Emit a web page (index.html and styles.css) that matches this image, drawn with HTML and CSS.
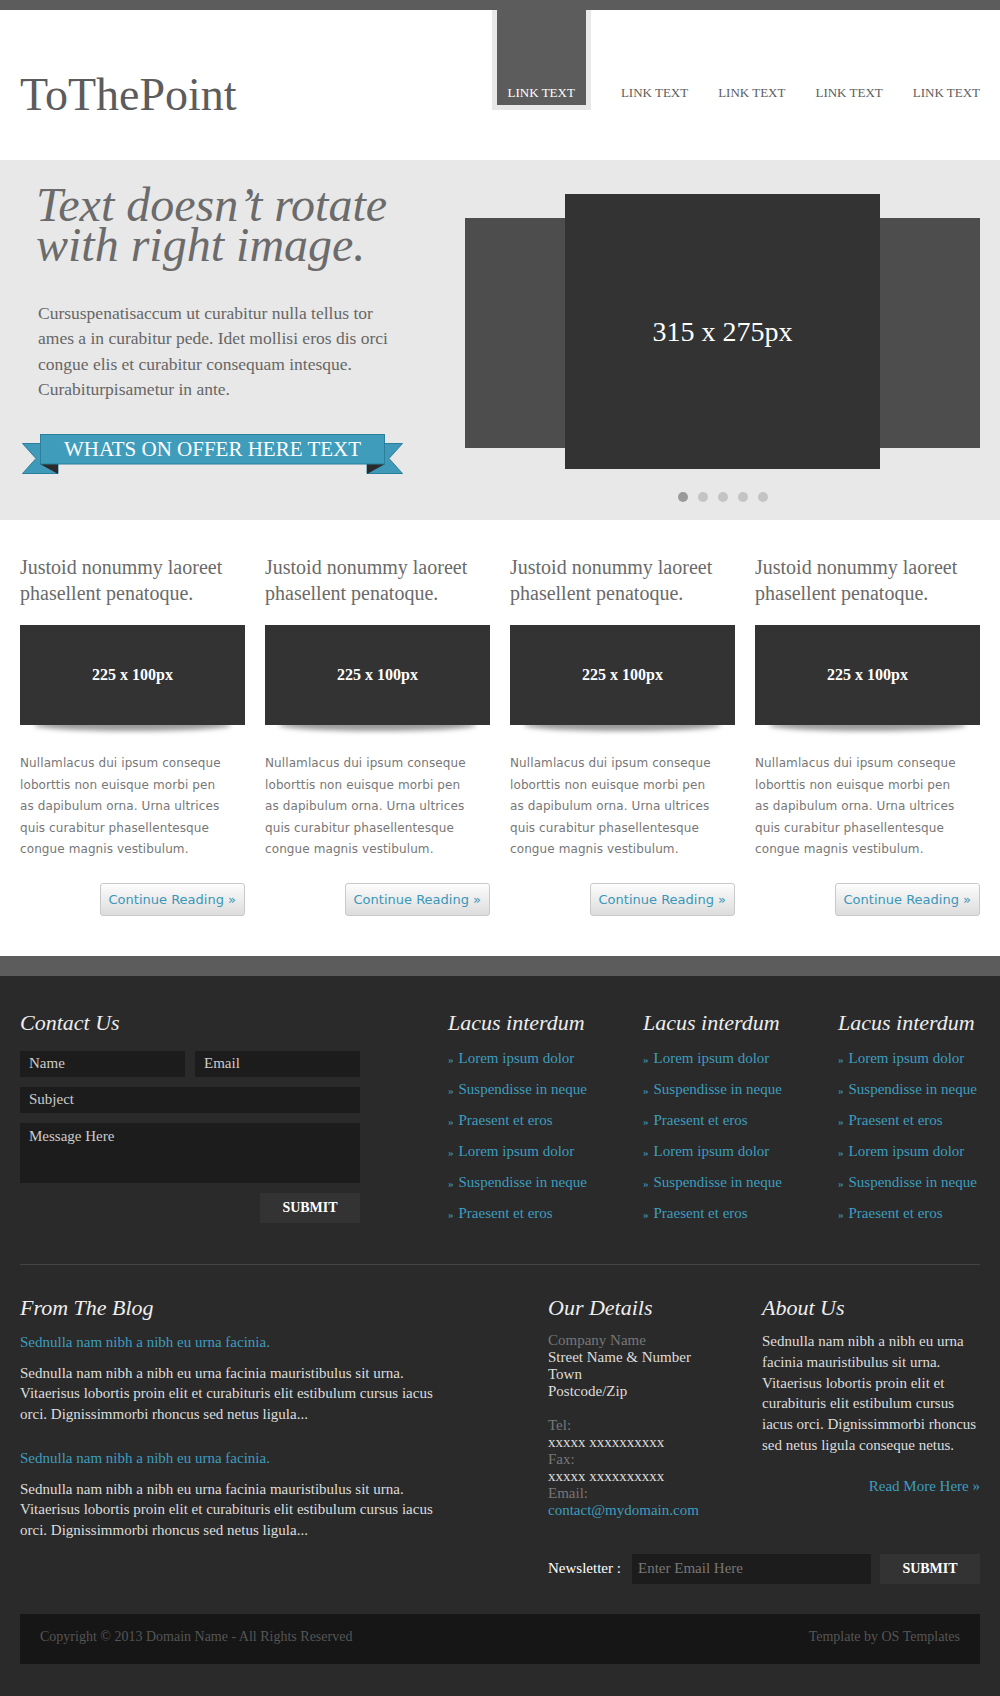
FILE: index.html
```html
<!DOCTYPE html>
<html lang="en">
<head>
    <meta charset="UTF-8">
    <meta name="viewport" content="width=device-width, initial-scale=1.0">
    <title>ToThePoint</title>
    <link rel="stylesheet" href="styles.css">
</head>
<body>

    <div class="topbar"></div>

    <!-- Header -->
    <div class="header">
        <div class="wrap header-inner">
            <h1 class="logo">ToThePoint</h1>
            <ul class="nav">
                <li class="active"><a href="#">LINK TEXT</a></li>
                <li><a href="#">LINK TEXT</a></li>
                <li><a href="#">LINK TEXT</a></li>
                <li><a href="#">LINK TEXT</a></li>
                <li><a href="#">LINK TEXT</a></li>
            </ul>
        </div>
    </div>

    <!-- Hero -->
    <div class="hero">
        <div class="wrap hero-inner">
            <div class="hero-text">
                <h2>Text doesn’t rotate with right image.</h2>
                <p>Cursuspenatisaccum ut curabitur nulla tellus tor ames a in curabitur pede. Idet mollisi eros dis orci congue elis et curabitur consequam intesque. Curabiturpisametur in ante.</p>
                <div class="ribbon">
                    <svg class="ribbon-bg" width="381" height="40" viewBox="0 0 381 40">
                        <polygon points="0.5,9.5 36,9.5 36,39.5 0.5,39.5 14,24.5" fill="#3f9aba" stroke="#2b7f9c"/>
                        <polygon points="380.5,9.5 345,9.5 345,39.5 380.5,39.5 367,24.5" fill="#3f9aba" stroke="#2b7f9c"/>
                        <polygon points="18,30 36,30 36,40" fill="#2b2b2b"/>
                        <polygon points="363,30 345,30 345,40" fill="#2b2b2b"/>
                        <rect x="18.5" y="0.5" width="344" height="29.5" fill="#409cbb" stroke="#2b7f9c"/>
                    </svg>
                    <span>WHATS ON OFFER HERE TEXT</span>
                </div>
            </div>
            <div class="hero-slider">
                <div class="slider">
                    <div class="slide-back"></div>
                    <div class="slide-main">315 x 275px</div>
                </div>
                <ul class="dots">
                    <li class="on"></li>
                    <li></li>
                    <li></li>
                    <li></li>
                    <li></li>
                </ul>
            </div>
        </div>
    </div>

    <!-- Features -->
    <div class="features">
        <div class="wrap cards">
            <div class="card">
                <h3>Justoid nonummy laoreet phasellent penatoque.</h3>
                <div class="thumb">225 x 100px</div>
                <p>Nullamlacus dui ipsum conseque loborttis non euisque morbi pen as dapibulum orna. Urna ultrices quis curabitur phasellentesque congue magnis vestibulum.</p>
                <div class="more"><a href="#">Continue Reading &raquo;</a></div>
            </div>
            <div class="card">
                <h3>Justoid nonummy laoreet phasellent penatoque.</h3>
                <div class="thumb">225 x 100px</div>
                <p>Nullamlacus dui ipsum conseque loborttis non euisque morbi pen as dapibulum orna. Urna ultrices quis curabitur phasellentesque congue magnis vestibulum.</p>
                <div class="more"><a href="#">Continue Reading &raquo;</a></div>
            </div>
            <div class="card">
                <h3>Justoid nonummy laoreet phasellent penatoque.</h3>
                <div class="thumb">225 x 100px</div>
                <p>Nullamlacus dui ipsum conseque loborttis non euisque morbi pen as dapibulum orna. Urna ultrices quis curabitur phasellentesque congue magnis vestibulum.</p>
                <div class="more"><a href="#">Continue Reading &raquo;</a></div>
            </div>
            <div class="card">
                <h3>Justoid nonummy laoreet phasellent penatoque.</h3>
                <div class="thumb">225 x 100px</div>
                <p>Nullamlacus dui ipsum conseque loborttis non euisque morbi pen as dapibulum orna. Urna ultrices quis curabitur phasellentesque congue magnis vestibulum.</p>
                <div class="more"><a href="#">Continue Reading &raquo;</a></div>
            </div>
        </div>
    </div>

    <!-- Footer -->
    <div class="footer">
        <div class="wrap">
            <div class="footer-top">
                <div class="contact">
                    <h4>Contact Us</h4>
                    <form class="contact-form">
                        <input type="text" placeholder="Name">
                        <input type="text" placeholder="Email">
                        <input type="text" class="wide" placeholder="Subject">
                        <textarea class="wide" placeholder="Message Here"></textarea>
                        <button type="button" class="submit">SUBMIT</button>
                    </form>
                </div>
                <div class="links">
                    <div>
                        <h4>Lacus interdum</h4>
                        <ul>
                            <li><a href="#">Lorem ipsum dolor</a></li>
                            <li><a href="#">Suspendisse in neque</a></li>
                            <li><a href="#">Praesent et eros</a></li>
                            <li><a href="#">Lorem ipsum dolor</a></li>
                            <li><a href="#">Suspendisse in neque</a></li>
                            <li><a href="#">Praesent et eros</a></li>
                        </ul>
                    </div>
                    <div>
                        <h4>Lacus interdum</h4>
                        <ul>
                            <li><a href="#">Lorem ipsum dolor</a></li>
                            <li><a href="#">Suspendisse in neque</a></li>
                            <li><a href="#">Praesent et eros</a></li>
                            <li><a href="#">Lorem ipsum dolor</a></li>
                            <li><a href="#">Suspendisse in neque</a></li>
                            <li><a href="#">Praesent et eros</a></li>
                        </ul>
                    </div>
                    <div>
                        <h4>Lacus interdum</h4>
                        <ul>
                            <li><a href="#">Lorem ipsum dolor</a></li>
                            <li><a href="#">Suspendisse in neque</a></li>
                            <li><a href="#">Praesent et eros</a></li>
                            <li><a href="#">Lorem ipsum dolor</a></li>
                            <li><a href="#">Suspendisse in neque</a></li>
                            <li><a href="#">Praesent et eros</a></li>
                        </ul>
                    </div>
                </div>
            </div>

            <div class="footer-bottom">
                <div class="blog">
                    <h4>From The Blog</h4>
                    <div class="post">
                        <h5><a href="#">Sednulla nam nibh a nibh eu urna facinia.</a></h5>
                        <p>Sednulla nam nibh a nibh eu urna facinia mauristibulus sit urna. Vitaerisus lobortis proin elit et curabituris elit estibulum cursus iacus orci. Dignissimmorbi rhoncus sed netus ligula...</p>
                    </div>
                    <div class="post">
                        <h5><a href="#">Sednulla nam nibh a nibh eu urna facinia.</a></h5>
                        <p>Sednulla nam nibh a nibh eu urna facinia mauristibulus sit urna. Vitaerisus lobortis proin elit et curabituris elit estibulum cursus iacus orci. Dignissimmorbi rhoncus sed netus ligula...</p>
                    </div>
                </div>
                <div class="info">
                    <div class="info-cols">
                        <div class="details">
                            <h4>Our Details</h4>
                            <p><span class="muted">Company Name</span><br>Street Name &amp; Number<br>Town<br>Postcode/Zip</p>
                            <p><span class="muted">Tel:</span><br>xxxxx xxxxxxxxxx<br><span class="muted">Fax:</span><br>xxxxx xxxxxxxxxx<br><span class="muted">Email:</span><br><a href="#">contact@mydomain.com</a></p>
                        </div>
                        <div class="about">
                            <h4>About Us</h4>
                            <p>Sednulla nam nibh a nibh eu urna facinia mauristibulus sit urna. Vitaerisus lobortis proin elit et curabituris elit estibulum cursus iacus orci. Dignissimmorbi rhoncus sed netus ligula conseque netus.</p>
                            <p class="read"><a href="#">Read More Here &raquo;</a></p>
                        </div>
                    </div>
                    <form class="newsletter">
                        <label>Newsletter :</label>
                        <input type="text" placeholder="Enter Email Here">
                        <button type="button" class="submit">SUBMIT</button>
                    </form>
                </div>
            </div>

            <div class="copyright">
                <span>Copyright &copy; 2013 Domain Name - All Rights Reserved</span>
                <span>Template by OS Templates</span>
            </div>
        </div>
    </div>

</body>
</html>
```

FILE: styles.css
```css
body {
    margin: 0;
    background: #2a2a2a;
    font-family: "Liberation Serif", serif;
}
a {
    text-decoration: none;
}
.wrap {
    width: 960px;
    margin: 0 auto;
}
.topbar {
    height: 10px;
    background: #5c5c5c;
}

/* header */
.header {
    background: #fff;
    height: 150px;
}
.header-inner {
    display: flex;
    justify-content: space-between;
    align-items: flex-start;
}
.logo {
    margin: 62px 0 0;
    font: normal 46px/46px "Liberation Serif", serif;
    color: #5c5c5c;
}
.nav {
    display: flex;
    gap: 30px;
    list-style: none;
    margin: 0;
    padding: 0;
}
.nav a {
    display: block;
    padding: 73px 0 2px;
    font: 13px/20px "Liberation Serif", serif;
    color: #5c5c5c;
}
.nav .active a {
    padding: 73px 11px 2px;
    background: #5c5c5c;
    color: #fff;
    border: solid #e8e8e8;
    border-width: 0 5px 5px;
}

/* hero */
.hero {
    background: #e8e8e8;
    padding: 26px 0 18px;
}
.hero-inner {
    display: flex;
}
.hero-text {
    width: 445px;
}
.hero-text h2 {
    margin: -1px 0 0;
    padding-left: 16px;
    max-width: 390px;
    font: italic 48px/40px "Liberation Serif", serif;
    color: #6b6b6b;
}
.hero-text p {
    margin: 35.5px 0 0;
    padding-left: 18px;
    width: 362px;
    font: 17.5px/25.5px "Liberation Serif", serif;
    color: #666;
}
.ribbon {
    position: relative;
    width: 381px;
    height: 40px;
    margin: 31.5px 0 0 2px;
}
.ribbon-bg {
    position: absolute;
    top: 0;
    left: 0;
}
.ribbon span {
    position: relative;
    display: block;
    width: 345px;
    margin-left: 18px;
    text-align: center;
    font: 21px/30px "Liberation Serif", serif;
    color: #fff;
}
.hero-slider {
    width: 515px;
    padding-top: 8px;
}
.slider {
    position: relative;
    height: 275px;
}
.slide-back {
    position: absolute;
    top: 24px;
    left: 0;
    right: 0;
    height: 230px;
    background: #4d4d4d;
}
.slide-main {
    position: relative;
    width: 315px;
    height: 275px;
    margin: 0 auto;
    background: #333;
    color: #fff;
    display: flex;
    align-items: center;
    justify-content: center;
    font: 28px "Liberation Serif", serif;
}
.dots {
    display: flex;
    justify-content: center;
    gap: 10px;
    margin: 23px 0 0;
    padding: 0;
    list-style: none;
}
.dots li {
    width: 10px;
    height: 10px;
    border-radius: 50%;
    background: #c4c4c4;
}
.dots li.on {
    background: #9a9a9a;
}

/* features */
.features {
    background: #fff;
    padding: 34px 0 40px;
}
.cards {
    display: grid;
    grid-template-columns: repeat(4, 225px);
    gap: 20px;
}
.card {
    position: relative;
    z-index: 0;
}
.card h3 {
    margin: 0;
    font: normal 20px/26px "Liberation Serif", serif;
    color: #6a6a6a;
}
.thumb {
    position: relative;
    height: 100px;
    margin-top: 19px;
    background: #333;
    color: #fff;
    display: flex;
    align-items: center;
    justify-content: center;
    font: bold 16px "Liberation Serif", serif;
}
.thumb::after {
    content: "";
    position: absolute;
    z-index: -1;
    left: 14px;
    right: 14px;
    top: 94px;
    height: 12px;
    border-radius: 50%;
    background: #999;
    filter: blur(2.5px);
}
.card p {
    width: 208px;
    margin: 28px 0 0;
    font: 12px/21.6px "DejaVu Sans", sans-serif;
    letter-spacing: 0.1px;
    color: #777;
}
.more {
    display: flex;
    justify-content: flex-end;
    margin-top: 22px;
}
.more a {
    display: block;
    height: 31px;
    padding: 0 8px;
    border: 1px solid #c9c9c9;
    border-radius: 3px;
    background: linear-gradient(#fdfdfd, #dcdcdc);
    color: #3a97b8;
    font: 13px/31px "DejaVu Sans", sans-serif;
}

/* footer */
.footer {
    background: #2a2a2a;
    border-top: 20px solid #5c5c5c;
    padding: 34px 0 32px;
    color: #ddd;
    font: 15px "Liberation Serif", serif;
}
.footer a {
    color: #3e9dbf;
}
.footer h4 {
    margin: 0;
    font: italic 22px/26px "Liberation Serif", serif;
    color: #eee;
}
.footer-top {
    display: flex;
}
.contact {
    flex: none;
    width: 340px;
}
.contact-form {
    display: grid;
    grid-template-columns: 165px 165px;
    gap: 10px;
    margin-top: 15px;
}
.contact-form input, .contact-form textarea, .newsletter input {
    box-sizing: border-box;
    width: 100%;
    height: 26px;
    margin: 0;
    padding: 0 9px;
    border: none;
    background: #1c1c1c;
    color: #ccc;
    font: 15px "Liberation Serif", serif;
}
.contact-form input::placeholder, .contact-form textarea::placeholder {
    color: #ccc;
    opacity: 1;
}
.contact-form .wide {
    grid-column: 1 / 3;
}
.contact-form textarea {
    height: 60px;
    padding: 5px 9px;
    line-height: 17px;
    resize: none;
}
.submit {
    width: 100px;
    height: 30px;
    border: none;
    background: #333;
    color: #fff;
    font: bold 14px "Liberation Serif", serif;
}
.contact-form .submit {
    grid-column: 2;
    justify-self: end;
}
.links {
    display: grid;
    grid-template-columns: repeat(3, 142px);
    gap: 53px;
    margin-left: 88px;
}
.links ul {
    list-style: none;
    margin: 7px 0 0;
    padding: 0;
}
.links li {
    height: 31px;
    line-height: 31px;
    white-space: nowrap;
}
.links li::before {
    content: "»";
    font-size: 11px;
    line-height: 0;
    margin-right: 5px;
    color: #3e9dbf;
}
.footer-bottom {
    display: flex;
    border-top: 1px solid #444;
    margin-top: 35px;
    padding-top: 30px;
}
.blog {
    width: 436px;
}
.post h5 {
    margin: 11px 0 0;
    font: normal 15px/20.5px "Liberation Serif", serif;
}
.post p {
    margin: 10.5px 0 0;
    line-height: 20.5px;
}
.post + .post {
    margin-top: 23.5px;
}
.info {
    width: 432px;
    margin-left: 92px;
}
.info-cols {
    display: flex;
}
.details {
    width: 214px;
}
.details p {
    margin: 11px 0 0;
    line-height: 17px;
}
.details p + p {
    margin-top: 17px;
}
.muted {
    color: #777;
}
.about {
    width: 218px;
}
.about p {
    margin: 10px 0 0;
    line-height: 20.8px;
}
.about .read {
    margin-top: 20px;
    text-align: right;
}
.newsletter {
    display: flex;
    align-items: center;
    margin: 35px 0 0;
}
.newsletter label {
    width: 84px;
    color: #fff;
}
.newsletter input {
    width: 239px;
    height: 30px;
    padding: 0 6px;
    color: #777;
}
.newsletter input::placeholder {
    color: #777;
    opacity: 1;
}
.newsletter .submit {
    margin-left: 9px;
}
.copyright {
    display: flex;
    justify-content: space-between;
    margin-top: 30px;
    height: 50px;
    padding: 0 20px;
    background: #161616;
    line-height: 46px;
    font-size: 14px;
    color: #555;
}
```
